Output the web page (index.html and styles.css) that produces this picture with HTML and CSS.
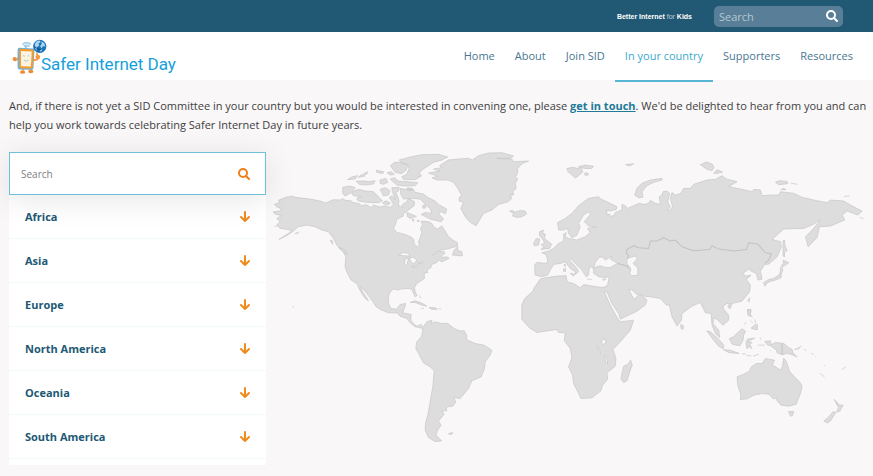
FILE: index.html
```html
<!DOCTYPE html>
<html lang="en">
<head>
<meta charset="utf-8">
<meta name="viewport" content="width=device-width, initial-scale=1">
<title>Safer Internet Day - In your country</title>
<link rel="stylesheet" href="styles.css">
</head>
<body>
<div class="topbar">
  <a class="bik" href="#">Better Internet <span>for</span> Kids</a>
  <form class="top-search">
    <input type="search" placeholder="Search" aria-label="Search the site">
    <button type="submit" aria-label="Search">
      <svg viewBox="0 0 12 12" width="12" height="12"><circle cx="5" cy="5" r="4"/><path d="M8 8l3 3"/></svg>
    </button>
  </form>
</div>

<header class="header">
  <a class="logo" href="#">
    <svg viewBox="34 36 106 111" width="35" height="37" aria-hidden="true">
      <path d="M66 55q12-10 25 0M70 61q8-5 17 0" fill="none" stroke="#a9d3ec" stroke-width="6"/>
      <path d="M76 60v8" stroke="#8fc3e4" stroke-width="5"/>
      <path d="M54 94q-12 16-14 4m60 4q12 2 15-8" fill="none" stroke="#f5a04c" stroke-width="6" stroke-linecap="round"/>
      <circle cx="42" cy="99" r="6" fill="#f08a3c"/><circle cx="112" cy="93" r="7" fill="#f39a43"/>
      <path d="M112 90l-3-8" stroke="#f39a43" stroke-width="5" stroke-linecap="round"/>
      <path d="M67 128v10m23-10v8" stroke="#f6b566" stroke-width="8"/>
      <ellipse cx="66" cy="139" rx="8" ry="5" fill="#ef8b35"/><ellipse cx="91" cy="137" rx="8" ry="5" fill="#ef8b35"/>
      <path d="M56 65l42 2q5 1 4 6l-3 54q-1 5-6 5l-37-1q-5-1-5-6V71q0-6 5-6z" fill="#6bb1dc"/>
      <path d="M60 68l37 2q3 1 3 4l-3 50q-1 4-4 4l-33-1q-4 0-4-4V73q0-5 4-5z" fill="#f39b2d"/>
      <path d="M61 75l33 1-3 46-30-1z" fill="#fff3df"/>
      <path d="M67 91q3-5 6 0m8 0q3-5 6 0M70 102q7 8 14 0" fill="none" stroke="#65b4df" stroke-width="2"/>
      <circle cx="118" cy="61" r="20" fill="#1972b5"/>
      <path d="M103 53q5-10 14-11l4 6-7 4 3 6-7 5-2 11q-6-8-5-21zm20-8l9 6 3 11-7-2-4 7-5-7 5-6zm-6 24l9 2-5 7z" fill="#a9d5ef"/>
      <path d="M103 62q9 9 19 9" fill="none" stroke="#0a4786" stroke-width="3"/>
    </svg>
    <span>Safer Internet Day</span>
  </a>
  <nav class="nav" aria-label="Main">
    <a href="#">Home</a>
    <a href="#">About</a>
    <a href="#">Join SID</a>
    <a href="#" class="active" aria-current="page">In your country</a>
    <a href="#">Supporters</a>
    <a href="#">Resources</a>
  </nav>
</header>

<main class="main">
  <p class="intro">And, if there is not yet a SID Committee in your country but you would be interested in convening one, please <a href="#">get in touch</a>. We'd be delighted to hear from you and can help you work towards celebrating Safer Internet Day in future years.</p>
  <div class="columns">
    <div class="finder">
      <form class="finder-search">
        <input type="search" placeholder="Search" aria-label="Search countries">
        <button type="submit" aria-label="Search countries">
          <svg viewBox="0 0 12 12" width="12" height="12"><circle cx="5" cy="5" r="4"/><path d="M8 8l3 3"/></svg>
        </button>
      </form>
      <div class="regions">
        <button type="button">Africa <svg viewBox="0 0 12 12" width="12" height="12"><path d="M6 1v9M2 6l4 4 4-4"/></svg></button>
        <button type="button">Asia <svg viewBox="0 0 12 12" width="12" height="12"><path d="M6 1v9M2 6l4 4 4-4"/></svg></button>
        <button type="button">Europe <svg viewBox="0 0 12 12" width="12" height="12"><path d="M6 1v9M2 6l4 4 4-4"/></svg></button>
        <button type="button">North America <svg viewBox="0 0 12 12" width="12" height="12"><path d="M6 1v9M2 6l4 4 4-4"/></svg></button>
        <button type="button">Oceania <svg viewBox="0 0 12 12" width="12" height="12"><path d="M6 1v9M2 6l4 4 4-4"/></svg></button>
        <button type="button">South America <svg viewBox="0 0 12 12" width="12" height="12"><path d="M6 1v9M2 6l4 4 4-4"/></svg></button>
      </div>
    </div>
    <svg class="map" viewBox="3 21 1794 879" role="img" aria-label="World map">
      <!-- Americas -->
      <path d="M28 178L45 172 40 166 58 158 80 153 92 157 135 162 165 168 182 174 205 164 225 165 235 161 240 166 258 167 262 172 282 176 290 182 303 179 318 187 325 180 345 186 358 182 375 187 385 178 378 165 372 158 380 152 390 165 382 140 380 128 402 127 400 138 392 142 398 155 402 170 398 178 413 188 412 178 425 170 430 160 448 170 447 182 430 195 415 205 415 213 395 222 390 240 385 250 395 262 420 268 440 277 445 282 448 298 457 305 463 300 460 290 465 278 470 262 466 250 472 240 468 228 490 230 500 235 505 245 517 252 530 243 540 258 550 275 563 285 577 293 577 303 560 308 545 312 530 314 512 320 503 330 520 320 535 318 540 325 530 330 530 338 545 335 552 340 530 350 520 345 515 352 500 358 497 368 485 375 488 382 477 385 478 400 455 415 448 428 450 440 456 452 450 455 445 445 440 432 425 430 405 432 402 435 385 432 375 440 370 455 370 475 378 490 395 492 405 478 422 475 418 490 412 503 438 508 437 525 445 535 455 543 467 538 475 545 485 530 500 525 500 537 507 530 530 535 548 535 567 550 583 557 597 557 605 570 603 583 630 595 657 600 680 615 675 630 660 650 658 670 648 695 620 707 610 730 585 760 565 757 572 770 563 783 543 785 545 797 530 797 537 807 520 827 528 840 517 855 513 870 530 887 510 889 490 877 480 855 482 830 488 810 495 770 503 725 507 677 495 665 475 653 463 630 452 610 455 590 470 573 473 550 460 547 450 545 435 533 425 520 405 513 395 503 370 503 345 493 333 485 325 472 305 445 288 423 292 440 303 455 310 467 300 460 290 445 282 430 275 415 258 405 245 380 240 365 242 335 235 320 215 300 205 280 190 260 170 255 150 245 125 240 100 245 85 258 65 272 42 283 70 265 80 255 60 252 45 250 35 240 45 230 35 220 50 212 28 206 25 200 45 198 50 192 35 185Z"/>
      <path class="sea" d="M400 330L415 322 432 325 433 333 415 332ZM420 340L430 340 425 362 418 358ZM434 337L445 337 455 345 447 357 437 350ZM440 365L460 360 456 366ZM458 354L474 351 472 355Z"/>
      <path d="M233 127L250 123 270 127 262 140 250 148 240 153 233 145ZM268 137L280 133 300 138 325 140 335 150 345 160 352 168 340 173 305 172 280 168 275 160 290 155 265 152 260 145ZM247 104L262 95 278 92 270 102ZM273 108L300 108 312 110 330 107 325 117 300 120 282 118ZM280 97L290 88 300 93ZM295 87L307 80 305 88ZM333 76L357 80 352 86 335 82ZM345 105L362 100 368 112 355 118 345 115ZM366 83L378 80 388 88 375 90ZM345 133L360 128 375 137 370 150 355 153 350 142ZM352 174L362 167 376 174 367 180ZM376 62L388 52 405 52 428 60 423 75 410 86 390 82ZM402 45L440 35 470 29 520 28 548 36 530 45 505 52 490 62 470 75 462 85 470 92 450 104 415 103 410 95 425 88 432 70 428 58 412 55ZM375 102L388 98 400 108 430 110 458 113 450 122 420 123 395 120ZM405 130L420 133 445 133 450 142 475 147 490 158 510 168 520 178 545 192 540 207 530 200 520 205 535 222 528 230 495 222 468 208 480 202 500 205 495 190 480 178 465 162 440 160 415 162 407 148ZM427 128L442 130 440 137 427 135ZM425 202L440 208 454 214 435 220 427 215ZM472 182L480 180 482 188 474 190ZM440 225L446 222 445 229ZM455 227L460 225 462 230ZM562 330L567 315 578 305 577 315 590 320 592 332 582 332ZM195 285L202 288 203 298ZM220 307L235 312 248 327 235 322ZM90 266L101 261 96 265ZM28 244L35 244M82 484L87 486M435 472L450 467 470 474 485 483 470 480 450 472ZM492 487L510 488 516 492 500 493ZM467 490H476M520 491H528M463 450L467 460M551 865L563 862 560 867 551 867Z"/>
      <!-- Greenland and Iceland -->
      <path d="M490 84L525 78 505 72 530 68 523 62 550 45 580 42 610 40 622 45 640 32 670 24 710 23 745 33 735 40 695 40 740 42 745 50 790 48 770 56 758 70 757 85 750 98 758 102 750 115 753 130 743 140 745 150 735 150 740 160 728 170 700 178 680 195 655 205 640 230 633 242 615 232 600 215 587 190 595 172 582 168 582 157 590 152 578 130 565 112 548 105 515 105 500 98 520 94ZM733 198L745 197 748 202 765 196 780 198 784 207 770 215 755 217 742 213 745 205Z"/>
      <g transform="translate(735 30)">
        <!-- Europe, Asia and Africa -->
        <path d="M142 203L165 190 185 175 205 152 235 130 265 125 272 132 300 145 320 155 318 163 300 168 290 165 290 180 298 177 300 185 312 180 315 172 335 165 335 148 345 152 352 160 370 152 385 145 400 148 415 145 420 136 435 145 450 148 447 125 455 120 458 110 470 108 478 115 472 140 480 155 470 165 478 165 487 155 480 130 485 112 495 120 512 115 520 100 540 100 550 88 590 75 615 73 635 62 648 72 680 80 655 95 695 103 725 110 730 103 750 105 755 122 780 120 805 120 810 110 850 115 875 127 910 135 950 143 960 135 1000 138 1025 153 1055 168 1042 180 1010 168 995 180 1003 195 960 213 927 215 920 247 893 275 885 245 905 225 930 195 910 207 880 220 820 222 785 253 810 260 813 275 800 305 775 327 763 328 750 348 755 372 743 375 738 355 720 347 717 340 698 355 705 363 722 360 708 373 720 390 718 410 695 438 665 445 650 445 638 452 640 462 655 480 655 495 638 510 620 493 610 488 608 505 625 525 628 547 615 535 605 510 602 475 585 473 570 442 545 453 515 475 513 495 500 513 485 485 477 450 468 450 450 430 420 425 400 423 388 415 380 419 365 405 355 402 365 422 372 432 385 420 390 418 410 435 405 450 380 468 330 492 325 475 305 445 290 410 282 410 300 450 322 490 332 500 370 495 360 525 330 560 308 583 317 610 315 633 290 653 292 673 277 690 272 707 245 728 212 730 205 715 190 685 187 660 175 635 185 607 180 580 162 557 165 533 145 532 140 523 80 532 60 520 35 493 35 475 35 450 42 432 68 408 72 398 90 372 105 368 140 363 168 362 170 380 190 385 210 398 220 388 240 392 275 397 285 395 292 390 297 365 280 367 265 365 250 355 250 342 240 333 236 345 235 360 228 365 215 345 195 325 182 310 178 315 200 340 205 350 195 358 195 350 180 340 165 320 150 325 130 328 120 345 112 360 95 365 75 360 73 330 80 322 110 325 112 312 107 298 95 293 115 288 130 280 145 265 160 258 160 238 168 232 165 245 175 250 200 255 225 245 240 232 232 220 258 215 235 213 222 200 240 178 235 170 220 180 205 205 210 215 200 240 185 248 175 235 172 220 160 225 145 225Z"/>
        <path class="sea" d="M250 338L255 322 265 308 275 305 285 315 305 303 300 312 322 325 300 337 285 337 270 332ZM350 310L375 303 381 312 368 325 382 338 383 360 365 362 358 355 362 342 350 325ZM273 560L280 552 287 553 285 565 277 568ZM260 570L265 575 271 596 266 594ZM284 600L290 608 292 626 286 620Z"/>
        <path class="border" d="M322 325L350 333 357 340M352 310L355 300 348 295 350 283 370 272 385 278 415 280 420 258 440 258 460 248 480 258 495 255 515 275 550 287 598 283 605 272 625 282 670 288 708 283 715 263 742 267 765 293 783 295 775 315 763 325"/>
        <path d="M88 230L100 225 97 235 105 237 103 250 115 260 124 267 118 280 92 283 102 275 93 270 103 262 97 252 88 242ZM70 265L78 250 88 252 85 270 72 272ZM170 40L190 37 200 40 212 38 218 50 205 62 195 69 185 60 173 50ZM205 35L225 30 250 34 243 41 220 40ZM222 55L230 53 236 58 226 62ZM346 29L370 26 358 33ZM385 128L373 120 380 100 395 85 420 75 455 70 455 75 430 82 410 92 395 110 398 127ZM180 355L193 357 190 363ZM160 341L166 341 165 350 160 349ZM161 329L165 327 165 335ZM230 372L245 373M277 373L287 371 280 376ZM335 655L340 633 353 627 361 615 366 630 360 645 350 677 340 682 332 672Z"/>
      </g>
      <g transform="translate(1215 15)">
        <!-- Arctic islands, Sakhalin and Japan -->
        <path d="M90 44L108 36 125 42 131 52 125 62 110 58ZM130 70L140 59 157 66 140 70ZM315 97L325 92 350 94 352 101 325 104ZM360 99L380 103M331 119L340 115 346 119ZM520 140L537 137M568 202L580 206M338 272L343 270 343 285 350 302 342 305 343 320 338 318ZM333 345L340 340 338 330 355 338 345 345 335 352ZM279 398L295 388 310 385 325 375 330 365 330 352 338 358 333 370 332 383 315 390 300 394 288 400 284 408ZM232 450L238 443 236 456ZM173 465L184 463 180 475 174 473ZM231 478L241 478 240 492 233 494Z"/>
      </g>
      <g transform="translate(1155 375)">
        <!-- Southeast Asia and Oceania -->
        <path d="M91 163L100 168 98 178 92 175ZM169 182L180 185 203 205 220 225 219 236 205 228 190 210ZM220 239L240 240 266 250 235 247ZM237 205L250 200 262 187 275 176 285 183 280 195 278 210 268 227 245 222ZM293 120L302 118 300 135 306 140 293 136ZM300 151L307 158M313 148L316 160M302 174L312 165 321 163 321 178 312 178ZM281 164L288 156M290 208L295 206 313 204 300 210 293 215 305 217 298 222 304 235 295 228 290 236 287 220ZM275 251L286 252M289 256L303 257M308 258L326 252M322 225H342M329 202L331 209M343 214L360 212 362 224 375 217 400 220 413 231 425 238 427 247 440 260 420 252 408 250 395 254 380 248 378 240 360 226 352 225ZM431 238L445 236 452 227M461 237L468 242M483 250L490 252M495 260L497 262M508 309L522 320M574 298L586 290M521 285L524 287M359 240L362 241M260 320L280 312 297 303 303 290 318 280 335 280 345 265 372 270 366 284 390 300 396 288 400 264 408 275 417 303 432 320 450 338 455 350 450 370 437 402 415 408 392 405 380 392 378 382 370 387 355 372 335 370 310 375 290 386 270 388 271 372 262 345ZM414 424L430 424 426 436 420 438ZM551 388L562 398 564 404 578 405 568 423 558 426 564 412ZM548 424L556 427 549 438 540 452 532 458 520 453 535 440Z"/>
        <path class="border" d="M395 220V253"/>
      </g>
    </svg>
  </div>
</main>
</body>
</html>
```

FILE: styles.css
```css
* {
  box-sizing: border-box;
}

body {
  margin: 0;
  background: #f9f7f8;
  color: #404040;
  font-family: "Open Sans", "Noto Sans", sans-serif;
  font-size: 11px;
}

a {
  color: inherit;
  text-decoration: none;
}

input,
button {
  font: inherit;
  border: 0;
  background: none;
  padding: 0;
  margin: 0;
}

input {
  flex: 1;
  min-width: 0;
  outline: 0;
  appearance: none;
}

button {
  display: flex;
  align-items: center;
  cursor: pointer;
}

button svg {
  fill: none;
  stroke: currentColor;
  stroke-width: 2;
  stroke-linecap: round;
  stroke-linejoin: round;
}

.topbar {
  display: flex;
  align-items: center;
  justify-content: flex-end;
  gap: 22px;
  height: 32px;
  padding: 0 30px;
  background: #215874;
  color: #fff;
}

.bik {
  font-family: "Liberation Sans", Arial, sans-serif;
  font-size: 7px;
  font-weight: 700;
}

.bik span {
  font-weight: 400;
  opacity: 0.7;
}

.top-search {
  display: flex;
  align-items: center;
  width: 129px;
  height: 21px;
  padding: 0 5px;
  border-radius: 5px;
  background: #587f97;
}

.top-search input {
  color: #fff;
}

.top-search input::placeholder {
  color: #b3c6d1;
}

.top-search button {
  color: #fff;
}

.header {
  display: flex;
  justify-content: space-between;
  height: 48px;
  padding: 0 10px 0 12px;
  background: #fff;
}

.logo {
  display: flex;
  align-items: flex-start;
  padding-top: 6px;
  color: #159fdc;
  font-family: Roboto, sans-serif;
  font-size: 17px;
}

.logo span {
  margin: 15px 0 0 -6px;
  line-height: 22px;
}

.nav {
  display: flex;
  height: 50px;
}

.nav a {
  padding: 0 10px;
  border-bottom: 2px solid transparent;
  color: #487792;
  line-height: 48px;
}

.nav .active {
  color: #3da9cc;
  border-color: #56b6d4;
}

.main {
  padding: 16px 0 11px 9px;
}

.intro {
  margin: 0 0 18px;
  line-height: 19px;
}

.intro a {
  color: #217a96;
  font-weight: 700;
  text-decoration: underline;
}

.columns {
  display: grid;
  grid-template-columns: 30% 1fr;
  align-items: start;
  padding-right: 9px;
}

.finder {
  background: #fff;
  padding-bottom: 6px;
}

.finder-search {
  position: relative;
  display: flex;
  align-items: center;
  height: 43px;
  padding: 0 15px 0 11px;
  border: 1px solid #6fc0d8;
  background: #fff;
  box-shadow: 0 5px 30px rgba(0, 0, 0, 0.1);
}

.finder-search input {
  color: #444;
  font-size: 10px;
}

.finder-search input::placeholder {
  color: #808080;
}

.finder-search button {
  color: #ef7f1a;
}

.regions button {
  justify-content: space-between;
  width: 100%;
  height: 44px;
  padding: 0 15px 0 16px;
  border-bottom: 1px solid #f2f9fc;
  color: #215874;
  font-weight: 700;
}

.regions svg {
  color: #ef8a1d;
}

.map {
  display: block;
  width: 100%;
  fill: #ddd;
  stroke: #c6c6c6;
  stroke-width: 2;
  stroke-linejoin: round;
}

.map .sea {
  fill: #f9f7f8;
}

.map .border {
  fill: none;
  stroke: #c2c2c2;
  stroke-width: 3;
}
```
